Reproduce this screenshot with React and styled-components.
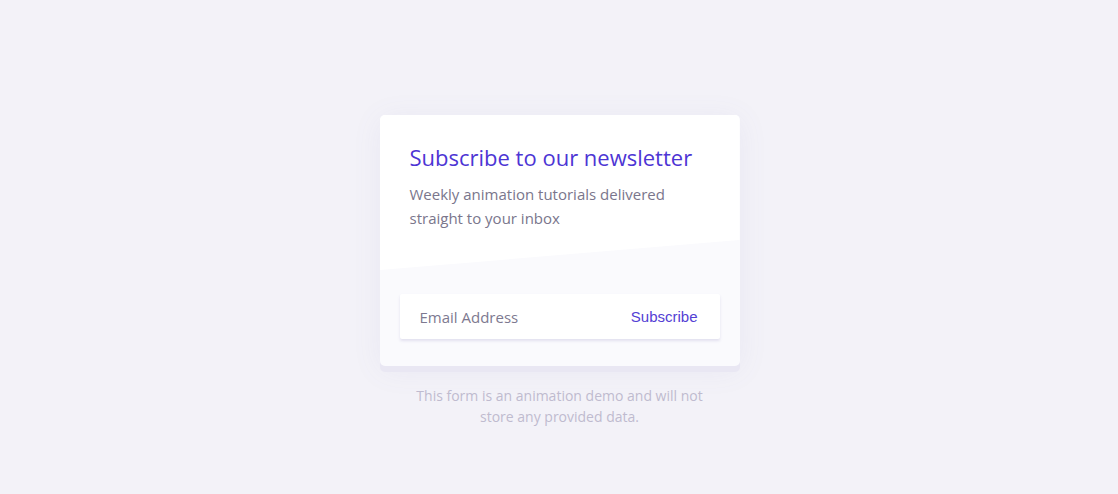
import React from "react";
import styled, { createGlobalStyle } from "styled-components";

const GlobalStyle = createGlobalStyle`
  html, body {
    margin: 0;
    padding: 0;
    background: #f3f2f8;
  }
  body {
    font-family: "Open Sans", "Liberation Sans", sans-serif;
  }
`;

const StyledMain = styled.main`
  display: flex;
  flex-direction: column;
  align-items: center;
  height: 494px;
  padding: 115px 0 0 1px;
  box-sizing: border-box;
`;

const StyledCard = styled.section`
  width: 360px;
  height: 251px;
  border-radius: 5px;
  background: #fafafd;
  overflow: hidden;
  box-shadow: 0 6px 0 #e9e7f3, 0 4px 30px rgba(120, 110, 180, 0.08);
`;

const StyledTop = styled.div`
  box-sizing: border-box;
  background: #ffffff;
  padding: 26px 30px 0 30px;
  height: 155px;
  clip-path: polygon(0 0, 100% 0, 100% 125px, 0 155px);
`;

const StyledH1 = styled.h1`
  margin: 0 0 9px 0;
  font-size: 22px;
  font-weight: 400;
  line-height: 32px;
  color: #4d35d4;
`;

const StyledText = styled.p`
  margin: 0;
  font-size: 15px;
  line-height: 24px;
  color: #7a768c;
`;

const StyledForm = styled.form`
  display: flex;
  align-items: center;
  justify-content: space-between;
  margin: 24px 20px 0 20px;
  height: 45px;
  padding: 0 20px;
  background: #ffffff;
  border-radius: 2px;
  box-shadow: 0 2px 3px rgba(120, 110, 180, 0.18);
`;

const StyledInput = styled.input`
  border: none;
  outline: none;
  background: transparent;
  font-family: "Open Sans", sans-serif;
  font-size: 15px;
  color: #7a768c;
  padding: 0;
  width: 180px;

  &::placeholder {
    color: #7d7990;
  }
`;

const StyledButton = styled.button`
  border: none;
  background: none;
  padding: 0 2px 0 0;
  font-family: "Liberation Sans", Arial, sans-serif;
  font-size: 15px;
  color: #5340d4;
  cursor: pointer;
`;

const StyledNote = styled.p`
  margin: 19px 0 0 0;
  width: 300px;
  text-align: center;
  font-size: 14px;
  line-height: 21px;
  color: #bfbbcf;
`;

const App = () => {
  return (
    <StyledMain>
      <GlobalStyle />
      <StyledCard>
        <StyledTop>
          <StyledH1>Subscribe to our newsletter</StyledH1>
          <StyledText>
            Weekly animation tutorials delivered
            <br />
            straight to your inbox
          </StyledText>
        </StyledTop>
        <StyledForm onSubmit={(e) => e.preventDefault()}>
          <StyledInput type="email" placeholder="Email Address" />
          <StyledButton type="submit">Subscribe</StyledButton>
        </StyledForm>
      </StyledCard>
      <StyledNote>
        This form is an animation demo and will not store any provided data.
      </StyledNote>
    </StyledMain>
  );
};

export default App;
